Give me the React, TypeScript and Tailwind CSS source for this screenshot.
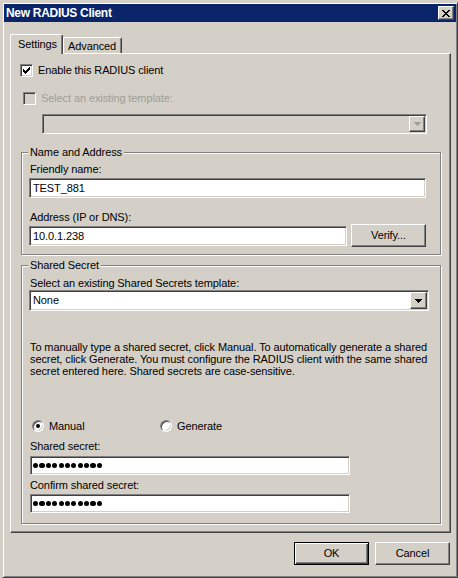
import React from "react";

const sunken =
  "border border-t-[#808080] border-l-[#808080] border-r-white border-b-white shadow-[inset_1px_1px_0_#404040,inset_-1px_-1px_0_#d4d0c8]";
const raised =
  "border border-t-white border-l-white border-r-[#404040] border-b-[#404040] shadow-[inset_-1px_-1px_0_#808080] bg-[#d4d0c8]";
const etched =
  "border border-[#808080] shadow-[inset_1px_1px_0_#ffffff,1px_1px_0_#ffffff]";

function Arrow({ disabled }: { disabled?: boolean }) {
  return (
    <svg width="7" height="4" viewBox="0 0 7 4" shapeRendering="crispEdges">
      <path
        d="M0 0h7v1H0zM1 1h5v1H1zM2 2h3v1H2zM3 3h1v1H3z"
        fill={disabled ? "#a09d96" : "#000"}
      />
    </svg>
  );
}

function Check() {
  return (
    <svg width="7" height="7" viewBox="0 0 7 7" shapeRendering="crispEdges">
      <path
        d="M6 0h1v1H6zM5 1h2v1H5zM0 2h1v1H0zM4 2h3v1H4zM0 3h2v1H0zM3 3h3v1H3zM0 4h5v1H0zM1 5h3v1H1zM2 6h1v1H2z"
        fill="#000"
      />
    </svg>
  );
}

function Checkbox({ checked, disabled }: { checked?: boolean; disabled?: boolean }) {
  return (
    <div
      className={`w-[13px] h-[13px] shrink-0 flex items-center justify-center ${sunken} ${
        disabled ? "bg-[#d4d0c8]" : "bg-white"
      }`}
    >
      {checked ? <Check /> : null}
    </div>
  );
}

function Radio({ checked }: { checked?: boolean }) {
  return (
    <div className="w-[12px] h-[12px] shrink-0 rounded-full border border-t-[#808080] border-l-[#808080] border-r-white border-b-white shadow-[inset_1px_1px_0_#404040,inset_-1px_-1px_0_#d4d0c8] bg-white flex items-center justify-center">
      {checked ? <div className="w-[4px] h-[4px] rounded-full bg-black" /> : null}
    </div>
  );
}

function Dots() {
  return (
    <div className="flex items-center gap-[1.2px] pl-[2px] h-full">
      {Array.from({ length: 11 }).map((_, i) => (
        <div key={i} className="w-[5.2px] h-[5.2px] rounded-full bg-black" />
      ))}
    </div>
  );
}

export default function App() {
  return (
    <div className="w-[458px] h-[578px] bg-[#d4d0c8] overflow-hidden flex font-['Liberation_Sans',Arial,sans-serif] text-[11px] leading-[13px] tracking-[-0.1px] text-black">
      <div className="w-[2px] shrink-0" />
      <div className="mt-[2px] w-[456px] h-[576px] shrink-0 border border-t-[#d4d0c8] border-l-[#d4d0c8] border-r-[#404040] border-b-[#404040] shadow-[inset_1px_1px_0_#ffffff,inset_-1px_-1px_0_#808080] p-[1px] flex flex-col">
        {/* Title bar */}
        <div className="h-[18px] bg-[#0a246a] flex items-center pl-[2px] pr-[2px]">
          <span className="text-white font-bold text-[12px] tracking-[-0.3px]">New RADIUS Client</span>
          <div className={`ml-auto w-[16px] h-[14px] flex items-center justify-center ${raised}`}>
            <svg width="8" height="7" viewBox="0 0 8 7" shapeRendering="crispEdges">
              <path
                d="M0 0h2v1H0zM6 0h2v1H6zM1 1h2v1H1zM5 1h2v1H5zM2 2h4v1H2zM3 3h2v1H3zM2 4h4v1H2zM1 5h2v1H1zM5 5h2v1H5zM0 6h2v1H0zM6 6h2v1H6z"
                fill="#000"
              />
            </svg>
          </div>
        </div>

        {/* Tabs */}
        <div className="mt-[12px] ml-[6px] h-[19px] flex items-end">
          <div className="relative z-10 -mb-[1px] h-[20px] w-[53px] bg-[#d4d0c8] border-l border-t border-r border-l-white border-t-white border-r-[#404040] shadow-[inset_-1px_0_0_#808080] rounded-tl-[2px] rounded-tr-[2px] flex items-center pl-[7px]">
            Settings
          </div>
          <div className="h-[16px] w-[59px] bg-[#d4d0c8] border-l border-t border-r border-l-white border-t-white border-r-[#404040] shadow-[inset_-1px_0_0_#808080] rounded-tl-[2px] rounded-tr-[2px] flex items-center pl-[4px] pt-[1px]">
            Advanced
          </div>
        </div>

        {/* Panel */}
        <div className="ml-[6px] w-[441px] h-[480px] border border-t-white border-l-white border-r-[#404040] border-b-[#404040] shadow-[inset_-1px_-1px_0_#808080] flex flex-col">
          <div className="mt-[10px] ml-[9px] h-[13px] flex items-center">
            <Checkbox checked />
            <span className="ml-[5px]">Enable this RADIUS client</span>
          </div>
          <div className="mt-[15px] ml-[12px] h-[13px] flex items-center">
            <Checkbox disabled />
            <span className="ml-[5px] text-[#a09d96]">Select an existing template:</span>
          </div>
          <div className={`mt-[9px] ml-[31px] w-[385px] h-[20px] p-[1px] bg-[#d4d0c8] flex justify-end ${sunken}`}>
            <div className={`w-[16px] h-full flex items-center justify-center ${raised}`}>
              <Arrow disabled />
            </div>
          </div>

          {/* Name and Address */}
          <div className={`relative mt-[18px] ml-[10px] w-[420px] h-[103px] ${etched}`}>
            <span className="absolute left-[6px] top-[-7px] px-[2px] bg-[#d4d0c8]">Name and Address</span>
            <div className="flex flex-col pl-[7px]">
              <span className="mt-[10px] ml-[1px] h-[13px]">Friendly name:</span>
              <div className={`mt-[2px] w-[397px] h-[20px] bg-white flex items-center pl-[3px] ${sunken}`}>
                TEST_881
              </div>
              <span className="mt-[13px] ml-[1px] h-[13px]">Address (IP or DNS):</span>
              <div className="flex items-start h-[23px]">
                <div className={`mt-[2px] w-[318px] h-[20px] bg-white flex items-center pl-[3px] ${sunken}`}>
                  10.0.1.238
                </div>
                <div className={`ml-[4px] w-[75px] h-[23px] flex items-center justify-center ${raised}`}>
                  Verify...
                </div>
              </div>
            </div>
          </div>

          {/* Shared Secret */}
          <div className={`relative mt-[10px] ml-[10px] w-[420px] h-[259px] ${etched}`}>
            <span className="absolute left-[6px] top-[-7px] px-[2px] bg-[#d4d0c8]">Shared Secret</span>
            <div className="flex flex-col pl-[7px]">
              <span className="mt-[11px] ml-[1px] h-[13px]">Select an existing Shared Secrets template:</span>
              <div className={`w-[400px] h-[21px] p-[1px] bg-white flex items-center ${sunken}`}>
                <span className="pl-[2px] flex-1">None</span>
                <div className={`w-[17px] h-full flex items-center justify-center ${raised}`}>
                  <Arrow />
                </div>
              </div>
              <p className="mt-[30px] ml-[1px] leading-[12px] whitespace-nowrap">
                To manually type a shared secret, click Manual. To automatically generate a shared
                <br />
                secret, click Generate. You must configure the RADIUS client with the same shared
                <br />
                secret entered here. Shared secrets are case-sensitive.
              </p>
              <div className="mt-[43px] h-[12px] flex items-center">
                <div className="ml-[3px] w-[128px] flex items-center">
                  <Radio checked />
                  <span className="ml-[5px]">Manual</span>
                </div>
                <Radio />
                <span className="ml-[5px]">Generate</span>
              </div>
              <span className="mt-[8px] ml-[1px] h-[13px]">Shared secret:</span>
              <div className={`mt-[3px] ml-[1px] w-[320px] h-[19px] bg-white ${sunken}`}>
                <Dots />
              </div>
              <span className="mt-[4px] ml-[1px] h-[13px]">Confirm shared secret:</span>
              <div className={`mt-[2px] ml-[1px] w-[320px] h-[19px] bg-white ${sunken}`}>
                <Dots />
              </div>
            </div>
          </div>
        </div>

        {/* Buttons */}
        <div className="mt-[9px] flex justify-end gap-[6px] pr-[6px]">
          <div className="w-[75px] h-[23px] border border-black bg-[#d4d0c8] shadow-[inset_1px_1px_0_#ffffff,inset_-1px_-1px_0_#404040,inset_-2px_-2px_0_#808080] flex items-center justify-center">
            OK
          </div>
          <div className={`w-[75px] h-[23px] flex items-center justify-center ${raised}`}>Cancel</div>
        </div>
      </div>
    </div>
  );
}
